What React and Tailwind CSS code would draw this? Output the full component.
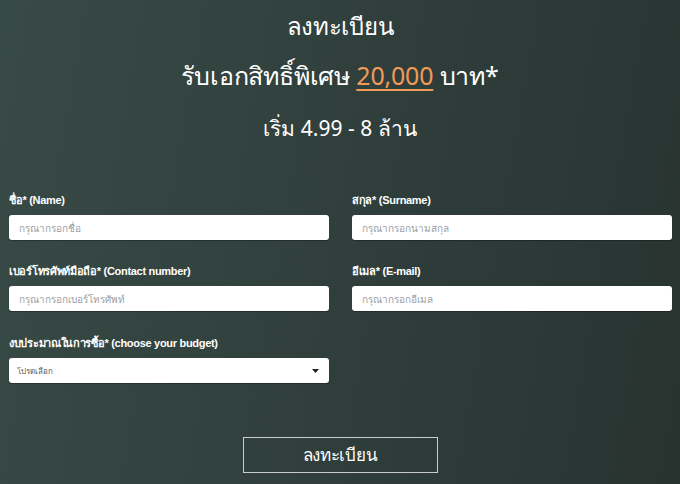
import React from "react";

const labelCls =
  "text-[11px] font-bold text-white leading-[14px] h-[14px] mb-[8px] tracking-[-0.3px] whitespace-nowrap";
const labelFont = { fontFamily: '"Liberation Sans", "Noto Sans", sans-serif' };

function Field({ label, placeholder }) {
  return (
    <div className="flex flex-col">
      <label className={labelCls} style={labelFont}>{label}</label>
      <input
        className="h-[25px] w-full rounded-[3px] bg-white px-[10px] text-[10px] text-gray-700 placeholder:text-[#9aa0a6] outline-none shadow-[0_1px_1px_rgba(0,0,0,0.3)]"
        placeholder={placeholder}
      />
    </div>
  );
}

export default function App() {
  return (
    <div
      className="w-[680px] h-[484px] overflow-hidden bg-[linear-gradient(100deg,#384a46_0%,#303f3c_50%,#283330_100%)] text-white"
      style={{ fontFamily: '"Noto Sans", "Liberation Sans", sans-serif' }}
    >
      <div className="flex flex-col items-center pt-[9px]">
        <h1 className="text-[24px] leading-[34px] font-normal tracking-[-0.3px]">ลงทะเบียน</h1>
        <h2 className="mt-[15px] text-[25px] leading-[34px] font-normal tracking-[-0.2px]">
          รับเอกสิทธิ์พิเศษ{" "}
          <span className="text-[#ef9a58] underline decoration-[2px] underline-offset-[4px]">20,000</span>{" "}
          บาท*
        </h2>
        <p className="mt-[21px] text-[21px] leading-[30px]">เริ่ม 4.99 - 8 ล้าน</p>
      </div>
      <div className="mt-[50px] pl-[9px] pr-[8px] grid grid-cols-2 gap-x-[23px] gap-y-[24px]">
        <Field label="ชื่อ* (Name)" placeholder="กรุณากรอกชื่อ" />
        <Field label="สกุล* (Surname)" placeholder="กรุณากรอกนามสกุล" />
        <Field label="เบอร์โทรศัพท์มือถือ* (Contact number)" placeholder="กรุณากรอกเบอร์โทรศัพท์" />
        <Field label="อีเมล* (E-mail)" placeholder="กรุณากรอกอีเมล" />
        <div className="flex flex-col pt-[1px]">
          <label className={labelCls} style={labelFont}>
            งบประมาณในการซื้อ* (choose your budget)
          </label>
          <div className="h-[25px] w-full rounded-[3px] bg-white pl-[8px] pr-[10px] flex items-center justify-between shadow-[0_1px_1px_rgba(0,0,0,0.3)]">
            <span className="text-[8px] text-[#555]">โปรดเลือก</span>
            <svg width="7" height="4" viewBox="0 0 7 4">
              <path d="M0 0 L7 0 L3.5 4 Z" fill="#222" />
            </svg>
          </div>
        </div>
        <div />
      </div>
      <div className="flex justify-center mt-[54px]">
        <button className="w-[195px] h-[36px] border-[1.5px] border-[#c8cccb] text-[17px] tracking-[-0.3px] text-white flex items-center justify-center">
          ลงทะเบียน
        </button>
      </div>
    </div>
  );
}
